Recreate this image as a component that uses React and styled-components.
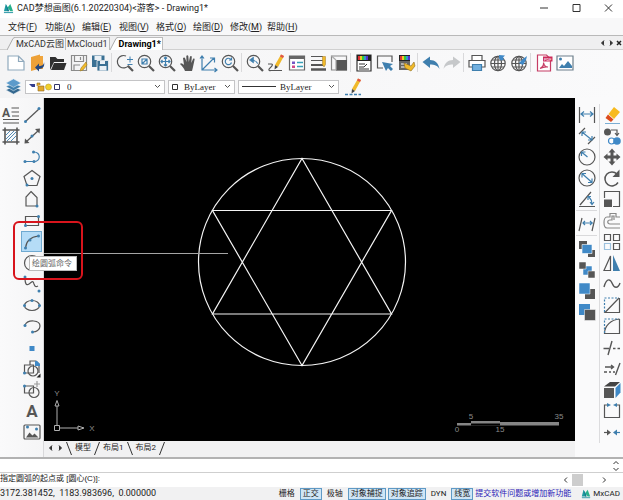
import { useState } from 'react'
import styled, { createGlobalStyle } from 'styled-components'

const GREY = '#565656'
const BLUE = '#3f7fae'
const SKY = '#4089c7'
const YELLOW = '#f0b92a'

const GlobalStyle = createGlobalStyle`
  * {
    box-sizing: border-box;
  }

  body {
    margin: 0;
    overflow: hidden;
    background: #f9f9fa;
    color: #222;
    font-family: Roboto, 'Noto Sans CJK SC', sans-serif;
  }

  button, input, select {
    margin: 0;
    padding: 0;
    border: none;
    background: none;
    color: inherit;
    font: inherit;
  }

  svg {
    display: block;
    flex: none;
  }
`

const Window = styled.div`
  display: flex;
  flex-direction: column;
  height: 100vh;
`

const TitleBar = styled.header`
  display: flex;
  align-items: center;
  height: 18px;
  padding: 0 9px 2px 3px;
  gap: 3px;
  background: #fff;
`

const Title = styled.h1`
  margin: 0;
  flex: 1;
  font-size: 9px;
  line-height: 16px;
  font-weight: 400;
  white-space: nowrap;
`

const WindowControls = styled.div`
  display: flex;
  gap: 20px;
`

const PlainButton = styled.button`
  display: flex;
  align-items: center;
  justify-content: center;
`

const MenuBar = styled.nav`
  display: flex;
  align-items: center;
  gap: 9px;
  height: 17px;
  padding-left: 8px;
  background: #f8f8f9;
`

const MenuItem = styled.button`
  width: 28px;
  font-size: 9px;
  line-height: 16px;
  text-align: left;
  white-space: nowrap;
`

const TabStrip = styled.div`
  display: flex;
  align-items: stretch;
  height: 15px;
  padding: 1px 1px 0 7px;
  border-top: 1px solid #b9b9b9;
  border-bottom: 1px solid #d0d0d0;
  background: #efeff0;
`

const DocTab = styled.button`
  display: flex;
  align-items: center;
  font-size: 9px;
  line-height: 12px;
  white-space: nowrap;
  font-weight: ${(p) => (p.$active ? 700 : 400)};
  color: ${(p) => (p.$active ? '#000' : '#333')};
`

const TabLabel = styled.span`
  height: 13px;
  padding: 0 1px;
  background: ${(p) => (p.$active ? '#fff' : '#f4f4f5')};
  border-top: 1px solid #bbb;
  border-right: 1px solid #bbb;
`

const TabControls = styled.div`
  display: flex;
  align-items: center;
  gap: 2px;
  margin-left: auto;
`

const ToolBar = styled.div`
  display: flex;
  align-items: center;
  height: 25px;
  padding-left: 5px;
  background: linear-gradient(90deg, #f4f4f5, #fafafb);
`

const PropertyBar = styled(ToolBar)`
  height: 23px;
  gap: 3px;
`

const Tool = styled.button`
  display: flex;
  align-items: center;
  justify-content: center;
  width: 21px;
  height: 21px;
  background: ${(p) => (p.$active ? '#b5dcf7' : 'none')};
  border: ${(p) => (p.$active ? '1px solid #6fa9d0' : 'none')};
`

const Separator = styled.span`
  width: 1px;
  height: 19px;
  margin: 0 2px 0 1px;
  background: #d9d9db;
`

const ColumnSeparator = styled.span`
  height: 1px;
  margin: 1px 0 2px;
  background: #d9d9db;
`

const Combo = styled.div`
  display: flex;
  align-items: center;
  gap: 2px;
  width: ${(p) => p.$width}px;
  height: 14px;
  padding: 0 3px;
  background: #fff;
  border: 1px solid #c4c4c6;
`

const ComboSelect = styled.select`
  flex: 1;
  min-width: 0;
  appearance: none;
  outline: none;
  padding-left: ${(p) => p.$indent}px;
  font-family: 'Liberation Serif', 'Noto Sans CJK SC', serif;
  font-size: 9px;
  line-height: 12px;
`

const Workspace = styled.main`
  display: flex;
  flex: 1;
  min-height: 0;
`

const DrawPanel = styled.aside`
  display: flex;
  width: 44px;
  padding: 6px 2px 14px 0;
  border-right: 1px solid #d8d8da;
  background: linear-gradient(90deg, #fafafb, #f5f5f6);
`

const ToolColumn = styled.div`
  display: flex;
  flex-direction: column;
  width: 21px;
`

const ToolCell = styled.div`
  position: relative;
  display: flex;
  flex: ${(p) => (p.$fill ? '1 1 0' : 'none')};
  align-items: center;
  min-height: 0;
`

const Highlight = styled.div`
  position: absolute;
  left: -8px;
  top: -10px;
  width: 70px;
  height: 59px;
  border: 2px solid #d8141c;
  border-radius: 6px;
  z-index: 3;
  pointer-events: none;
`

const Tooltip = styled.div`
  position: absolute;
  left: 8px;
  top: 25px;
  padding: 0 4px 0 2px;
  border: 1px solid #bbb;
  background: #fff;
  color: #666;
  font-size: 8px;
  line-height: 13px;
  white-space: nowrap;
  z-index: 2;
`

const EditPanel = styled.aside`
  display: flex;
  width: 48px;
  padding: 6px 0 14px 1px;
  gap: 2px;
  background: #fafafb;
`

const EditColumn = styled(ToolColumn)`
  width: 24px;
  padding-left: 1px;
  border-left: 1px solid #dcdcde;
`

const Center = styled.section`
  display: flex;
  flex: 1;
  flex-direction: column;
  min-width: 0;
`

const Canvas = styled.div`
  flex: 1;
  min-height: 0;
  background: #000;

  svg {
    width: 100%;
    height: 100%;
  }

  text {
    font-family: 'Liberation Sans', sans-serif;
    font-size: 8px;
    fill: #8a8a8a;
    text-anchor: middle;
  }
`

const LayoutTabs = styled.div`
  display: flex;
  align-items: center;
  gap: 3px;
  height: 16px;
  padding: 0 4px 2px;
  background: #f1f1f2;
`

const LayoutTab = styled.button`
  font-size: 8px;
  line-height: 12px;
  white-space: nowrap;
`

const CommandHistory = styled.div`
  display: flex;
  align-items: center;
  justify-content: flex-end;
  height: 15px;
  padding-right: 4px;
  border-top: 2px solid #b2b2b2;
  background: #fff;
`

const CommandRow = styled.div`
  display: flex;
  align-items: center;
  height: 15px;
  padding-right: 16px;
  border-top: 1px solid #cfcfcf;
  background: #fff;
`

const CommandLabel = styled.label`
  padding-bottom: 3px;
  font-family: 'Liberation Sans', 'Noto Sans CJK SC', sans-serif;
  font-size: 8px;
  line-height: 11px;
  white-space: nowrap;
`

const CommandInput = styled.input`
  flex: 1;
  min-width: 0;
  outline: none;
  font-size: 8px;
`

const ScrollTrack = styled.div`
  display: flex;
  align-items: center;
  justify-content: space-between;
  width: 44px;
`

const ScrollThumb = styled.span`
  width: 11px;
  height: 12px;
  margin-right: 16px;
  background: #cdcdcd;
`

const StatusBar = styled.footer`
  display: flex;
  align-items: center;
  gap: 2px;
  height: 13px;
  padding-right: 3px;
  background: #f1f1f2;
  font-size: 8px;
  line-height: 11px;
  white-space: nowrap;
`

const Coordinates = styled.span`
  flex: 1;
  font-size: 9px;
  white-space: pre;
`

const Toggle = styled.button`
  height: 12px;
  padding: 0 2px;
  line-height: 10px;
  border: 1px solid ${(p) => (p.$on ? '#5f9ac6' : 'transparent')};
  background: ${(p) => (p.$on ? '#cfe5f5' : 'none')};
`

const FeedbackLink = styled.a`
  color: #2a22b8;
  text-decoration: none;
  margin-right: 8px;
`

const Brand = styled.span`
  display: flex;
  align-items: center;
  gap: 2px;
`

const Icon = ({ children, size = 20 }) => (
  <svg width={size} height={size} viewBox="0 0 20 20" fill="none" stroke={GREY} strokeWidth="1.2" aria-hidden="true">
    {children}
  </svg>
)

// small blue grip point
const Dot = ({ x, y }) => <circle cx={x} cy={y} r="1.5" fill={BLUE} stroke="none" />

const Lens = ({ children }) => (
  <>
    <circle cx="8.5" cy="8.5" r="6.2" />
    <path d="M13 13l5 5" strokeWidth="2.2" />
    {children}
  </>
)

const Pencil = () => (
  <>
    <path d="M15 1.5l3 1.5-6 11-3-2z" fill={YELLOW} stroke="none" />
    <path d="M15 1.5l3 1.5-1 2-3-1.600z" fill="#e0524c" stroke="none" />
    <path d="M9 12l3 2-3.500 2.500z" fill="#444" stroke="none" />
  </>
)

const Globe = () => (
  <>
    <circle cx="10" cy="10.500" r="7.200" />
    <ellipse cx="10" cy="10.500" rx="3.500" ry="7.200" />
    <path d="M10 3.300v14.400M3 10.500h14M4 7h12M4 14h12" />
  </>
)

const Rainbow = ({ w }) => (
  <g stroke="none">
    <path d={`M3 2h${w}v6H3z`} fill="#222" />
    <path d="M4 3h2v4H4z" fill="#d33" />
    <path d="M6 3h2v4H6z" fill="#f0c52a" />
    <path d="M8 3h2v4H8z" fill="#3c3" />
    <path d="M10 3h2v4h-2z" fill="#39c" />
    <path d="M12 3h2v4h-2z" fill="#53c" />
  </g>
)

const icons = {
  newFile: <path d="M2 3h10.500L18 8.500V17H2zM12.500 3v5.500H18" fill="#fff" stroke="#8fa9bd" />,
  open: (
    <>
      <path d="M4 4l9-2.500v14L4 18z" fill="#eda138" stroke="none" />
      <path d="M13 3h3v13h-5l2-3z" fill="#f0a53c" stroke="none" />
      <path d="M17 9c0 3-2 4-5 4v-2.500L8 14.500l4 4V16c4 0 6-3 5-7z" fill="#24477f" stroke="none" />
    </>
  ),
  folder: (
    <>
      <path d="M2 17V4h5.500l2 2H16v3H6z" fill="#303030" stroke="none" />
      <path d="M6 10h12.500L16 17H3z" fill="#303030" stroke="none" />
    </>
  ),
  save: (
    <>
      <path d="M2.500 2.500h15v15h-15z" stroke="#8b8b8b" />
      <path d="M5.500 2.500v6h9v-6M5 17v-5h6M11.500 4v3" stroke="#8b8b8b" />
      <path d="M17 9l-5 6-1 3 3-1 4-5z" fill={YELLOW} stroke="#9a7b28" strokeWidth=".6" />
    </>
  ),
  saveAs: (
    <>
      <path d="M2 2.500h12.500V14H2z" fill="#3b7194" stroke="none" />
      <path d="M4.500 3h7v4h-7z" fill="#e9f0f5" stroke="none" />
      <path d="M7 7.500h11.500V18H7z" fill="#3b7194" stroke="#f5f5f5" strokeWidth=".8" />
      <path d="M10 8h5v3h-5zM9.500 13h7v4.500h-7z" fill="#e9f0f5" stroke="none" />
    </>
  ),
  zoomIn: (
    <>
      <path d="M13.500 12.500A6.200 6.200 0 1 1 11 3" />
      <path d="M13 13l5 5" strokeWidth="2.200" />
      <path d="M12 6.500h6M15 3.500v6M12.500 11.500h5" strokeWidth="1" stroke={BLUE} />
    </>
  ),
  zoomWindow: <Lens><path d="M6 6h5v5H6zM6 11l5-5" stroke={BLUE} /></Lens>,
  zoomExtents: <Lens><path d="M8.500 4v9M4 8.500h9M7 5.500l1.500-1.500L10 5.500M7 11.500l1.500 1.500 1.500-1.500M5.500 7L4 8.500 5.500 10M11.500 7L13 8.500 11.500 10" stroke={BLUE} /></Lens>,
  pan: (
    <path
      d="M7 18c-1-3-3-5-5-7 1-1.500 2.500-.5 4 1L5 5c1-1 2-.5 2.200.5L8.500 9 8.300 3c.5-1.200 1.700-1 2 0l.5 6L12 3.500c.6-1 1.800-.7 1.800.3L13.300 10l1.700-4c.8-.8 1.800-.3 1.600.6L15 14l-1 4z"
      fill={GREY}
      stroke="none"
    />
  ),
  axes: <path d="M3 3v14h15M3 17L15 5M1 5.500L3 3l2 2.500M15.500 15L18 17l-2.500 2M11 5h4.500v4.500" stroke={BLUE} />,
  zoomBack: <Lens><path d="M11 6.500A3.200 3.200 0 1 0 11.500 9.500M11.500 4.500v2.500H9" stroke={BLUE} /></Lens>,
  zoomPrev: <Lens><path d="M12.500 11c0-2-1-3-4-3v2L4.500 7 8.500 4v2" fill={BLUE} stroke={BLUE} strokeWidth=".6" /></Lens>,
  sketch: (
    <>
      <path d="M2 11h3.500c1.500 0 1 2-1 3.500S2 18 5 17.500h11" />
      <Pencil />
    </>
  ),
  properties: (
    <>
      <path d="M2.500 3h15v14h-15z" fill="#fff" stroke="#666" />
      <path d="M2 3h16v3H2z" fill="#666" stroke="none" />
      <path d="M5 8.500h3v2.500H5z" fill="#7656c4" stroke="none" />
      <path d="M5 12.500h3V15H5z" fill="#d14b88" stroke="none" />
      <path d="M10 9.500h6M10 13.500h6" stroke="#38a0b8" strokeWidth="1.600" />
    </>
  ),
  lineWeights: (
    <>
      <path d="M3 3.500h12M3 7.500h12" />
      <path d="M3 12h12" strokeWidth="2" />
      <path d="M3 16.500h15" strokeWidth="2.500" />
      <path d="M14.500 3.500h3v8L16 14l-1.500-2.500z" fill={YELLOW} stroke="#a37b28" strokeWidth=".5" />
    </>
  ),
  viewport: (
    <>
      <path d="M2.500 3h15v14h-15z" stroke="#888" />
      <path d="M7 7h11v10.500H7z" fill={GREY} stroke="none" />
      <path d="M7 17V7M2.500 3L7 7" stroke="#aaa" />
    </>
  ),
  colorForm: (
    <>
      <path d="M3 2h14v16H3z" fill="#fff" stroke="#333" />
      <Rainbow w={14} />
      <path d="M5 11h6M5 14h5l3-3M5 16h10" strokeWidth="1" stroke="#333" />
    </>
  ),
  selectArea: (
    <>
      <path d="M8 15H2.500V3H17v6" />
      <path d="M7 9l11 2-3 2 3 3-2 2-3-3-2 3z" fill={BLUE} stroke="none" />
    </>
  ),
  colorEdit: (
    <>
      <path d="M3 2h11v15H3z" fill="#666" stroke="none" />
      <Rainbow w={11} />
      <path d="M5 11h6M5 14h5" stroke="#fff" />
      <path d="M8 10l7 3 3-4 1 4-4 5-6-3z" fill={YELLOW} stroke="#8a6a20" strokeWidth=".6" />
    </>
  ),
  undo: <path d="M1.500 9L9 3.500V7c5 0 8.500 3 9.500 9-2-3.500-5-4.500-9.500-4.500V15z" fill={BLUE} stroke="none" />,
  redo: <path d="M18.500 9L11 3.500V7c-5 0-8.500 3-9.500 9 2-3.500 5-4.500 9.500-4.500V15z" fill="#c6c8ca" stroke="none" />,
  print: (
    <>
      <path d="M5 7V2.500h10V7M5 14H2V7.500h16V14h-3" fill="#fff" stroke="#555" />
      <path d="M5.500 11.500h9v6h-9z" fill="#72b0df" stroke={BLUE} />
    </>
  ),
  globeUp: (
    <>
      <Globe />
      <path d="M11 2l6 .5-2 2 1 2-3 1-2-2z" fill={SKY} stroke="none" />
    </>
  ),
  globePin: (
    <>
      <Globe />
      <path d="M18 3l-4 3-4 4 4 2 3-5z" fill={SKY} stroke="none" />
    </>
  ),
  pdf: (
    <>
      <path d="M3.500 2h9L16.500 6v12h-13z" fill="#fff" stroke="#c63d65" />
      <path d="M9 3.500h9.500v5H9z" fill="#cb2a5b" stroke="none" />
      <text x="10" y="7.500" fontSize="4" fill="#fff" stroke="none">PDF</text>
      <path d="M6 15.500c3-1.500 4-3.500 3.500-6 .5 3 2 4.500 4.500 4.500-3-.5-5 0-8 1.500z" stroke="#c63d65" />
    </>
  ),
  image: (
    <>
      <path d="M2 3h16v14H2z" fill="#fff" stroke="#6d7f8b" />
      <path d="M4 15l3-4 2 2 4-5 4 5v2z" fill={BLUE} stroke="none" />
      <Dot x={5.5} y={6} />
    </>
  ),
  layers: (
    <g stroke="#fff" strokeWidth=".6">
      <path d="M10 10l9 4-9 5-9-5z" fill="#33678f" />
      <path d="M10 6l9 4-9 5-9-5z" fill="#3e7fad" />
      <path d="M10 1l9 5-9 5-9-5z" fill="#5c9bcb" />
    </g>
  ),
  linePencil: (
    <>
      <Pencil />
      <path d="M2 17.500h16" stroke={BLUE} strokeWidth="1.500" strokeDasharray="3 1.500" />
    </>
  ),
  mtext: (
    <>
      <text x="1" y="11.500" fontSize="12" fontWeight="700" fill={GREY} stroke="none">A</text>
      <path d="M10.500 3H18M10.500 7H18M11 11h7M2 14.500h16M2 18h16" />
    </>
  ),
  hatch: (
    <>
      <path d="M4 1.500v17M16 1.500v17M1.500 4h17M1.500 16h17" strokeWidth="1.600" />
      <path d="M5 9l4-4M5 13l8-8M6 15l9-9M10 15l5-5" stroke={BLUE} strokeWidth=".9" />
    </>
  ),
  line: <><path d="M4 16L17 4" /><Dot x={3.5} y={16.5} /><Dot x={17} y={3.5} /></>,
  xline: (
    <>
      <path d="M4 16L17 4" />
      <path d="M13 3l5-.5-.5 5zM3 12.500l-.5 5 5-.5z" fill={GREY} stroke="none" />
      <Dot x={10} y={10} />
    </>
  ),
  polyline: <><path d="M3 14.500h9c7 0 7-9.500 0-9.500" stroke={BLUE} /><Dot x={3} y={14.5} /><Dot x={12} y={14.5} /><Dot x={11.500} y={5} /></>,
  polygon: <><path d="M10 2.500l8 6-3 9H5l-3-9z" /><Dot x={10} y={10.5} /><Dot x={5} y={17} /></>,
  freePolygon: <><path d="M9 2.500l6 6v8.500H4V8z" /><Dot x={15} y={17} /></>,
  rect: <><path d="M3.500 5.500h13v9h-13z" /><Dot x={3.5} y={14.5} /><Dot x={16.500} y={5.5} /></>,
  arc: <><path d="M3.500 16C4 10 8 5 16.500 4" /><Dot x={3.5} y={16} /><Dot x={8} y={8} /><Dot x={16.5} y={4} /></>,
  circle: <circle cx="10" cy="10" r="7.5" />,
  spline: <><path d="M3 4c0 5 1 8 4 6s4-4 5 0c1 3 2 3 4 2" /><Dot x={3} y={3} /><Dot x={17} y={17} /></>,
  ellipse: <><ellipse cx="10" cy="10.500" rx="7.500" ry="5" /><Dot x={2.5} y={10.5} /><Dot x={17.5} y={10.5} /><Dot x={10} y={5.5} /></>,
  ellipseArc: <><path d="M3 9c3-6 15-5 15 1 0 4-4 6-7 6" /><Dot x={3} y={9.5} /><Dot x={10.5} y={16} /></>,
  point: <path d="M7.500 8h5v5h-5z" fill={SKY} stroke="none" />,
  block: (
    <>
      <path d="M2.500 6h9v8h-9zM8 6V2h6l3 3v9" />
      <circle cx="11" cy="12" r="5" />
      <Dot x={2.5} y={14} />
      <path d="M13 2h2l3 3v2h-5z" fill={SKY} stroke="none" />
      <path d="M18.500 14.500v4h-4z" fill="#222" stroke="none" />
    </>
  ),
  insertBlock: (
    <>
      <path d="M2.500 6h9v7h-9z" />
      <path d="M15 1v6M12 4h6" stroke="#999" />
      <circle cx="12" cy="12.500" r="5" />
      <Dot x={2.5} y={6} />
    </>
  ),
  text: <text x="10" y="16" fontSize="17" fontWeight="700" textAnchor="middle" fill={GREY} stroke="none">A</text>,
  picture: (
    <>
      <rect x="2" y="3" width="16" height="14" rx="1" />
      <path d="M4 15.500l3.500-5 3 3 2-2 4 4z" fill={GREY} stroke="none" />
      <Dot x={5.5} y={5} /><Dot x={14.5} y={7} />
    </>
  ),
  dimLinear: <><path d="M2.500 2v16M17.500 2v16" /><path d="M4 9h12M7 6.500L4 9l3 2.500M13 6.500L16 9l-3 2.500" stroke={BLUE} /></>,
  dimAligned: <><path d="M2 8l6-6M11 18l7-7" /><path d="M5 6l10 8M5 10V6h4M15 10v4h-4" stroke={BLUE} /></>,
  dimRadius: <><circle cx="10" cy="10" r="8" /><path d="M4.500 5l6 5M4.500 9V5h4" stroke={BLUE} /></>,
  dimDiameter: <><circle cx="10" cy="10" r="8" /><path d="M5 5.500l10 9M5 9.500v-4h4M15 10.500v4h-4" stroke={BLUE} /></>,
  dimAngle: <><path d="M2 17.500h16M3 16L14 3" /><path d="M12 8c2 2 3 4 3 7M11 11V7.500h3M13 13l2 2.500 2-2.500" stroke={BLUE} /></>,
  dimOblique: <><path d="M2 17L5 4M15 17l3-13" /><path d="M6 9h10M8 7L6 9l2 2M13 7l2 2-2 2" stroke={BLUE} /></>,
  orderFront: (
    <g stroke="none">
      <path d="M2 2h8v8H2zM11 11h7v7h-7z" fill={GREY} />
      <path d="M5 5.500h10v9H5z" fill={SKY} stroke="#fff" strokeWidth=".6" />
    </g>
  ),
  orderBack: (
    <g stroke="#fff" strokeWidth=".5">
      <path d="M6 6h9v9H6z" fill={SKY} />
      <path d="M2 2h7v7H2zM11 11h7v7h-7z" fill={GREY} />
    </g>
  ),
  orderUp: (
    <g stroke="none">
      <path d="M8 8h10v10H8z" fill={GREY} />
      <path d="M2 2h11v11H2z" fill={SKY} stroke="#fff" strokeWidth=".5" />
    </g>
  ),
  orderDown: (
    <g stroke="none">
      <path d="M2 2h11v11H2z" fill={SKY} />
      <path d="M7.500 7.500h11v11h-11z" fill={GREY} stroke="#fff" strokeWidth=".5" />
    </g>
  ),
  erase: (
    <g stroke="none">
      <path d="M12 2l6 5-6 7-5.500-5z" fill="#f7ba1e" />
      <path d="M6 9.500l5.500 5L9 17 3.500 13z" fill="#dc4a1c" />
      <path d="M3 18h15v1H3z" fill="#7baed3" />
    </g>
  ),
  copy: (
    <>
      <circle cx="5.500" cy="6" r="3.500" fill={GREY} stroke="none" />
      <path d="M9 4h6v5M13 7l2 2.500L17 7" />
      <circle cx="9.500" cy="15" r="3" fill="#fff" stroke={SKY} />
      <circle cx="15" cy="15" r="3.800" fill={SKY} stroke="none" />
    </>
  ),
  move: (
    <path
      d="M10 1.500L13.500 5.500H11.500V8.500H14.500V6.500L18.500 10l-4 3.500v-2h-3v3h2L10 18.500 6.500 14.500h2v-3h-3v2L1.500 10l4-3.500v2h3v-3h-2z"
      fill={GREY}
      stroke="none"
    />
  ),
  rotate: <><path d="M15 6a7 7 0 1 0 1 8.500" strokeWidth="1.500" /><path d="M17.500 1.500v7.500h-7z" fill={GREY} stroke="none" /></>,
  scale: <><path d="M2.500 9V2.500h15v15H11" /><path d="M2 10.500h8V18H2z" fill={GREY} stroke="none" /></>,
  offset: <path d="M18 6h-4V2.500H8V6H5C1 6 1 17 5 17h13M18 13H8c-3 0-3-4 0-4h2V5h2v4" stroke="#888" />,
  array: <><path d="M2.500 2.500h6v6h-6zM11.500 2.500h6v6h-6zM11.500 11.500h6v6h-6z" /><path d="M2.500 11.500h6v6h-6z" stroke="#9cc1de" /></>,
  mirror: <><path d="M8.500 3v14.500H2z" /><path d="M11 2l7 16h-7z" fill={BLUE} stroke="none" /></>,
  wave: <path d="M2 13C5 2 9 6 10.500 10S16 15 18 9" strokeWidth="1.400" />,
  chamfer: <><path d="M17.500 3v14.500H3L17 3" /><path d="M2.500 17V3H17" stroke={BLUE} strokeDasharray="2 1.500" /></>,
  fillet: <><path d="M17.500 3v14.500h-15C2.500 10 9 3.500 17.500 3" /><path d="M2.500 17V3H17" stroke={BLUE} strokeDasharray="2 1.500" /></>,
  trim: <path d="M1.500 10.500H7M6 17l4-14M11 10.500h2.500M15.500 10.500H18" strokeWidth="1.400" />,
  extend: <path d="M3 8h8M9 6l2.500 2L9 10M2 13h3M7 13h2M11 13h2M13.500 16L18 4" strokeWidth="1.400" />,
  box: (
    <g stroke="none">
      <path d="M2 8h10v10H2z" fill={GREY} />
      <path d="M2 6.500L8 2h10l-5 4.500z" fill="#444" />
      <path d="M13.500 8L18.500 3v9.500L13.500 18z" fill={SKY} />
    </g>
  ),
  breakLine: <><path d="M6 4H2.500v12.500h15V4H14" /><path d="M5 2l4 2-4 2zM15 2l-4 2 4 2z" fill={BLUE} stroke="none" /></>,
  join: <><path d="M2 10.500h5" /><path d="M5 7.500l4 3-4 3z" fill={GREY} stroke="none" /><path d="M13 10.500h5" stroke={BLUE} /><path d="M15 7.500l-4 3 4 3z" fill={BLUE} stroke="none" /></>,
}

const MENUS = [
  ['文件', 'F'], ['功能', 'A'], ['编辑', 'E'], ['视图', 'V'],
  ['格式', 'O'], ['绘图', 'D'], ['修改', 'M'], ['帮助', 'H'],
]

const MAIN_TOOLS = [
  ['newFile', 'open', 'folder', 'save', 'saveAs'],
  ['zoomIn', 'zoomWindow', 'zoomExtents', 'pan', 'axes', 'zoomBack'],
  ['zoomPrev', 'sketch', 'properties', 'lineWeights', 'viewport'],
  ['colorForm', 'selectArea', 'colorEdit'],
  ['undo', 'redo'],
  ['print', 'globeUp', 'globePin'],
  ['pdf', 'image'],
]

const DRAW_TOOLS = [
  'line', 'xline', 'polyline', 'polygon', 'freePolygon', 'rect', 'arc', 'circle',
  'spline', 'ellipse', 'ellipseArc', 'point', 'block', 'insertBlock', 'text', 'picture',
]

const DIM_TOOLS = [
  ['dimLinear', 'dimAligned', 'dimRadius', 'dimDiameter', 'dimAngle'],
  ['dimOblique'],
  ['orderFront', 'orderBack', 'orderUp', 'orderDown'],
]

const EDIT_TOOLS = [
  'erase', 'copy', 'move', 'rotate', 'scale', 'offset', 'array', 'mirror',
  'wave', 'chamfer', 'fillet', 'trim', 'extend', 'box', 'breakLine', 'join',
]

const MODES = ['栅格', '正交', '极轴', '对象捕捉', '对象追踪', 'DYN', '线宽']

const ToolButton = ({ name, active, onClick }) => (
  <Tool type="button" aria-label={name} $active={active} onClick={onClick}>
    <Icon>{icons[name]}</Icon>
  </Tool>
)

const Logo = ({ size = 11 }) => (
  <svg width={size} height={size} viewBox="0 0 12 12" aria-hidden="true">
    <path d="M1 9L3 1l3 5v3z" fill="#1c9aa0" />
    <path d="M5 5l3-4 3 8H8z" fill="#27b08b" />
    <path d="M3 1l4 8H5z" fill="#167a8c" />
    <path d="M1 10h10v1H1z" fill="#1a8fa0" />
  </svg>
)

const Chevron = () => (
  <svg width="7" height="5" viewBox="0 0 7 5" fill="none" stroke="#555" aria-hidden="true">
    <path d="M1 1l2.500 2.500L6 1" />
  </svg>
)

// arrow in one of four directions, filled or as an open angle
const Arrow = ({ turn = 0, filled, size = 6 }) => (
  <svg width={size} height={size} viewBox="0 0 6 6" fill={filled ? '#333' : 'none'} stroke="#333" aria-hidden="true">
    <path d="M4 .5L1.500 3 4 5.500" transform={`rotate(${turn} 3 3)`} />
  </svg>
)

const Slash = ({ back }) => (
  <svg width="6" height="13" viewBox="0 0 6 13" stroke="#333" aria-hidden="true">
    <path d={back ? 'M.5 0l5 13' : 'M5.500 0l-5 13'} />
  </svg>
)

const TabSlope = ({ fill }) => (
  <svg width="8" height="13" viewBox="0 0 8 13" aria-hidden="true">
    <path d="M0 13L6 1.500Q7 .5 8 .5V13z" fill={fill} />
    <path d="M0 13L6 1.500Q7 .5 8 .5" fill="none" stroke="#aaa" />
  </svg>
)

const Drawing = () => (
  <svg viewBox="0 0 531 343" aria-label="Drawing1">
    <g fill="none" stroke="#f4f4f4" strokeWidth="1.200">
      <circle cx="258" cy="164" r="103.500" />
      <path d="M258 60.500L347.500 216h-179zM258 267.500L168.500 112.500h179z" />
    </g>
    <path d="M0 155.500h184" stroke="#a5a5a5" />
    <g fill="none" stroke="#b0b0b0">
      <path d="M10.500 327.500h5v5h-5zM13 327.500V308M11 308l2-5.500 2 5.500zM15.500 330H34M34 328l6 2-6 2z" />
    </g>
    <text x="13" y="298">Y</text>
    <text x="48" y="333">X</text>
    <path d="M413 323h102v4.500H413z" fill="#858585" />
    <path d="M413 323h14v2h-14zM427 325.500h29v2h-29zM456 323h59v1h-59z" fill="#000" />
    <text x="427" y="321">5</text>
    <text x="515" y="321">35</text>
    <text x="413" y="334">0</text>
    <text x="456" y="334">15</text>
  </svg>
)

export default function App() {
  const [tool, setTool] = useState('arc')
  const [tab, setTab] = useState('Drawing1*')
  const [command, setCommand] = useState('')
  const [modes, setModes] = useState(['正交', '对象捕捉', '对象追踪', '线宽'])

  const toggleMode = (mode) => {
    setModes((prev) => (prev.includes(mode) ? prev.filter((m) => m !== mode) : [...prev, mode]))
  }

  return (
    <Window>
      <GlobalStyle />
      <TitleBar>
        <Logo />
        <Title>{'CAD梦想画图(6.1.20220304)<游客> - Drawing1*'}</Title>
        <WindowControls>
          {['M2 6h8', 'M3 2.500h7v7H3z', 'M3 2.500l7 7M10 2.500l-7 7'].map((d, i) => (
            <PlainButton key={d} type="button" aria-label={['最小化', '最大化', '关闭'][i]}>
              <svg width="12" height="12" viewBox="0 0 12 12" fill="none" stroke="#333"><path d={d} /></svg>
            </PlainButton>
          ))}
        </WindowControls>
      </TitleBar>

      <MenuBar>
        {MENUS.map(([label, key]) => (
          <MenuItem key={key} type="button">{label}(<u>{key}</u>)</MenuItem>
        ))}
      </MenuBar>

      <TabStrip>
        {['MxCAD云图', 'MxCloud1', 'Drawing1*'].map((name, i) => (
          <DocTab key={name} type="button" $active={tab === name} onClick={() => setTab(name)}>
            {i !== 1 && <TabSlope fill={tab === name ? '#fff' : '#f4f4f5'} />}
            <TabLabel $active={tab === name}>{name}</TabLabel>
          </DocTab>
        ))}
        <TabControls>
          <PlainButton type="button" aria-label="上一个"><Arrow filled /></PlainButton>
          <PlainButton type="button" aria-label="下一个"><Arrow filled turn={180} /></PlainButton>
          <PlainButton type="button" aria-label="关闭标签">
            <svg width="6" height="6" viewBox="0 0 6 6" stroke="#222" strokeWidth="1.500"><path d="M1 1l4 4M5 1L1 5" /></svg>
          </PlainButton>
        </TabControls>
      </TabStrip>

      <ToolBar>
        {MAIN_TOOLS.map((group, i) => [
          i > 0 && <Separator key={`sep-${i}`} />,
          ...group.map((name) => <ToolButton key={name} name={name} />),
        ])}
      </ToolBar>

      <PropertyBar>
        <PlainButton type="button" aria-label="图层"><Icon size={17}>{icons.layers}</Icon></PlainButton>
        <Combo $width={140}>
          <svg width="32" height="10" viewBox="0 0 32 10" aria-hidden="true">
            <path d="M0 2h6v3H3z" fill="#343d8c" />
            <path d="M8 4V1h3v2M9 4h6v5H9z" fill="#e3a829" stroke="#8d6a22" strokeWidth=".6" />
            <circle cx="19.500" cy="5" r="3" fill="#f2d12b" stroke="#b59a2c" strokeWidth=".6" />
            <path d="M25.500 2.500h5v5h-5z" fill="none" stroke="#33356a" />
          </svg>
          <ComboSelect aria-label="图层" $indent={4}><option>0</option></ComboSelect>
          <Chevron />
        </Combo>
        <Combo $width={67}>
          <svg width="6" height="8" viewBox="0 0 6 8" fill="none" stroke="#333" aria-hidden="true"><path d="M.5 1.500h5v5h-5z" /></svg>
          <ComboSelect aria-label="颜色" $indent={4}><option>ByLayer</option></ComboSelect>
          <Chevron />
        </Combo>
        <Combo $width={101}>
          <svg width="34" height="3" viewBox="0 0 34 3" stroke="#333" aria-hidden="true"><path d="M0 1.500h34" /></svg>
          <ComboSelect aria-label="线型" $indent={2}><option>ByLayer</option></ComboSelect>
          <Chevron />
        </Combo>
        <ToolButton name="linePencil" />
      </PropertyBar>

      <Workspace>
        <DrawPanel>
          <ToolColumn>
            {['mtext', 'hatch'].map((name) => (
              <ToolCell key={name}><ToolButton name={name} /></ToolCell>
            ))}
          </ToolColumn>
          <ToolColumn>
            {DRAW_TOOLS.map((name) => (
              <ToolCell key={name} $fill>
                <ToolButton name={name} active={tool === name} onClick={() => setTool(name)} />
                {name === 'arc' && (
                  <>
                    <Tooltip role="tooltip">绘圆弧命令</Tooltip>
                    <Highlight />
                  </>
                )}
              </ToolCell>
            ))}
          </ToolColumn>
        </DrawPanel>

        <Center>
          <Canvas><Drawing /></Canvas>
          <LayoutTabs>
            <PlainButton type="button" aria-label="向左"><Arrow filled /></PlainButton>
            <PlainButton type="button" aria-label="向右"><Arrow filled turn={180} /></PlainButton>
            <Slash back />
            <LayoutTab type="button">模型</LayoutTab>
            <Slash />
            <LayoutTab type="button">布局1</LayoutTab>
            <Slash back />
            <LayoutTab type="button">布局2</LayoutTab>
            <Slash />
          </LayoutTabs>
        </Center>

        <EditPanel>
          <ToolColumn>
            {DIM_TOOLS.map((group, i) => [
              i > 0 && <ColumnSeparator key={`sep-${i}`} />,
              ...group.map((name) => <ToolButton key={name} name={name} />),
            ])}
          </ToolColumn>
          <EditColumn>
            {EDIT_TOOLS.map((name) => (
              <ToolCell key={name} $fill><ToolButton name={name} /></ToolCell>
            ))}
          </EditColumn>
        </EditPanel>
      </Workspace>

      <CommandHistory>
        <div>
          <PlainButton type="button" aria-label="向上滚动"><Arrow turn={90} /></PlainButton>
          <PlainButton type="button" aria-label="向下滚动"><Arrow turn={270} /></PlainButton>
        </div>
      </CommandHistory>
      <CommandRow>
        <CommandLabel htmlFor="command">指定圆弧的起点或 [圆心(C)]:</CommandLabel>
        <CommandInput id="command" value={command} onChange={(e) => setCommand(e.target.value)} />
        <ScrollTrack>
          <Arrow />
          <ScrollThumb />
          <Arrow turn={180} />
        </ScrollTrack>
      </CommandRow>

      <StatusBar>
        <Coordinates>3172.381452,  1183.983696,  0.000000</Coordinates>
        {MODES.map((mode) => (
          <Toggle
            key={mode}
            type="button"
            aria-pressed={modes.includes(mode)}
            $on={modes.includes(mode)}
            onClick={() => toggleMode(mode)}
          >
            {mode}
          </Toggle>
        ))}
        <FeedbackLink href="#feedback">提交软件问题或增加新功能</FeedbackLink>
        <Brand><Logo size={10} />MxCAD</Brand>
      </StatusBar>
    </Window>
  )
}
